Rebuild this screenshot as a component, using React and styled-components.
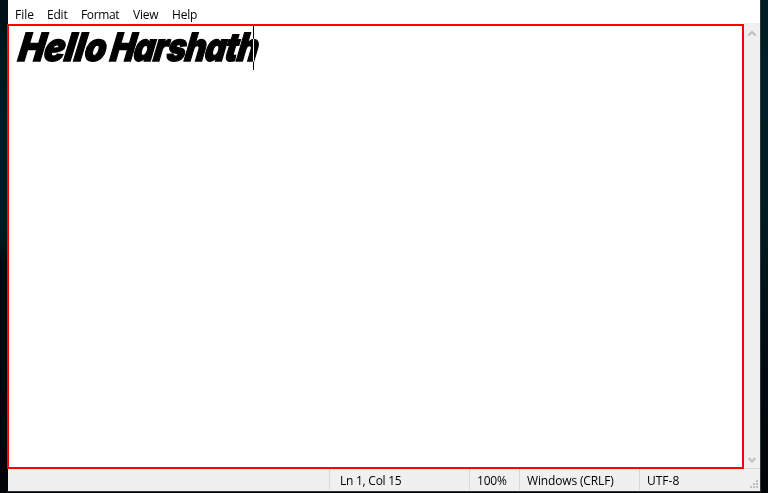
import React from "react";
import styled, { createGlobalStyle } from "styled-components";

const GlobalStyle = createGlobalStyle`
  * { box-sizing: border-box; }
  body { margin: 0; overflow: hidden; background: #000509; }
`;

const Desktop = styled.div`
  height: 493px;
  padding: 0 7px;
  background:
    linear-gradient(#001d24, #001f26 20%, #001a21 45%, #000a10 75%, #000508) right / 8px 100% no-repeat,
    linear-gradient(#001017 0 4%, #00141c 10%, #001923 25%, #001720 48%, #00060b 53%, #000408) left / 8px 100% no-repeat,
    #000509;
`;

const Window = styled.main`
  display: flex;
  flex-direction: column;
  width: 754px;
  height: 492px;
  border-right: 1px solid #2c3336;
  border-bottom: 1px solid #2c3336;
  font: 12px/16px "Open Sans", "Noto Sans", sans-serif;
  color: #000;
`;

const MenuBar = styled.nav`
  display: flex;
  height: 24px;
  flex: none;
  margin-left: 1px;
  padding: 7px 0 0 7px;
  background: #fff;
`;

const MenuItem = styled.span`
  flex: none;
  width: ${(p) => p.$width}px;
  letter-spacing: ${(p) => p.$spacing || 0}px;
  white-space: nowrap;
`;

const Body = styled.div`
  display: flex;
  height: 445px;
  flex: none;
`;

const Editor = styled.section`
  display: flex;
  width: 737px;
  padding-left: 8px;
  border: 2px solid #f00;
  background: #fff;
`;

const Line = styled.div`
  position: relative;
  display: flex;
  width: 237px;
  height: 44px;
`;

const Caret = styled.i`
  position: absolute;
  top: 0;
  right: 0;
  width: 1px;
  height: 44px;
  background: #fff;
  mix-blend-mode: difference;
`;

const Word = styled.span`
  flex: none;
  width: ${(p) => p.$width}px;
  font: italic 900 39px/42px Inter, sans-serif;
  letter-spacing: ${(p) => p.$spacing}px;
  white-space: nowrap;
  -webkit-text-stroke: 1.3px #000;
  transform: skewX(-9deg) scaleX(${(p) => p.$scale});
  transform-origin: left 36px;
`;

const ScrollBar = styled.aside`
  display: flex;
  flex-direction: column;
  justify-content: space-between;
  align-items: center;
  width: 16px;
  padding: 7px 1px 4px 0;
  margin-top: -1px;
  background: #f0f0f0;
  border-bottom: 1px solid #d7d7d7;
`;

const StatusBar = styled.footer`
  display: flex;
  height: 22px;
  flex: none;
  margin-left: 1px;
  background: #f0f0f0;
`;

const StatusCell = styled.div`
  flex: none;
  width: ${(p) => p.$width}px;
  height: 21px;
  padding: 4px 0 0 ${(p) => p.$pad || 7}px;
  border-left: ${(p) => (p.$first ? "none" : "1px solid #d7d7d7")};
  letter-spacing: ${(p) => p.$spacing || 0}px;
  white-space: nowrap;
`;

const Grip = styled.svg`
  display: block;
  align-self: flex-end;
  margin: 0 1px 2px auto;
`;

const menus = [
  ["File", 32, 0],
  ["Edit", 34, -0.2],
  ["Format", 52, -0.35],
  ["View", 39, -0.2],
  ["Help", 40, -0.2],
];

const dots = [[6, 0], [3, 3], [6, 3], [0, 6], [3, 6], [6, 6]];

function Chevron({ down }) {
  return (
    <svg width="8" height="7" viewBox="0 0 8 7">
      <path d={down ? "M.5 1 4 4.5 7.5 1" : "M.5 5.5 4 2 7.5 5.5"} fill="none" stroke="#bfbfbf" strokeWidth="2" />
    </svg>
  );
}

export default function App() {
  return (
    <Desktop>
      <GlobalStyle />
      <Window>
        <MenuBar>
          {menus.map(([label, width, spacing]) => (
            <MenuItem key={label} $width={width} $spacing={spacing}>{label}</MenuItem>
          ))}
        </MenuBar>
        <Body>
          <Editor>
            <Line>
              <Word $width={92} $scale={0.89} $spacing={-0.4}>Hello</Word>
              <Word $width={149} $scale={0.83} $spacing={-1.1}>Harshath</Word>
              <Caret />
            </Line>
          </Editor>
          <ScrollBar>
            <Chevron />
            <Chevron down />
          </ScrollBar>
        </Body>
        <StatusBar>
          <StatusCell $first $width={321} />
          <StatusCell $width={140} $pad={10} $spacing={-0.25}>Ln 1, Col 15</StatusCell>
          <StatusCell $width={50} $spacing={-0.2}>100%</StatusCell>
          <StatusCell $width={120} $spacing={-0.15}>Windows (CRLF)</StatusCell>
          <StatusCell $width={108}>UTF-8</StatusCell>
          <Grip width="9" height="9" viewBox="0 0 9 9" shapeRendering="crispEdges">
            {dots.map(([x, y]) => <rect key={`${x}-${y}`} x={x} y={y} width="2" height="2" fill="#bfbfbf" />)}
          </Grip>
        </StatusBar>
      </Window>
    </Desktop>
  );
}
